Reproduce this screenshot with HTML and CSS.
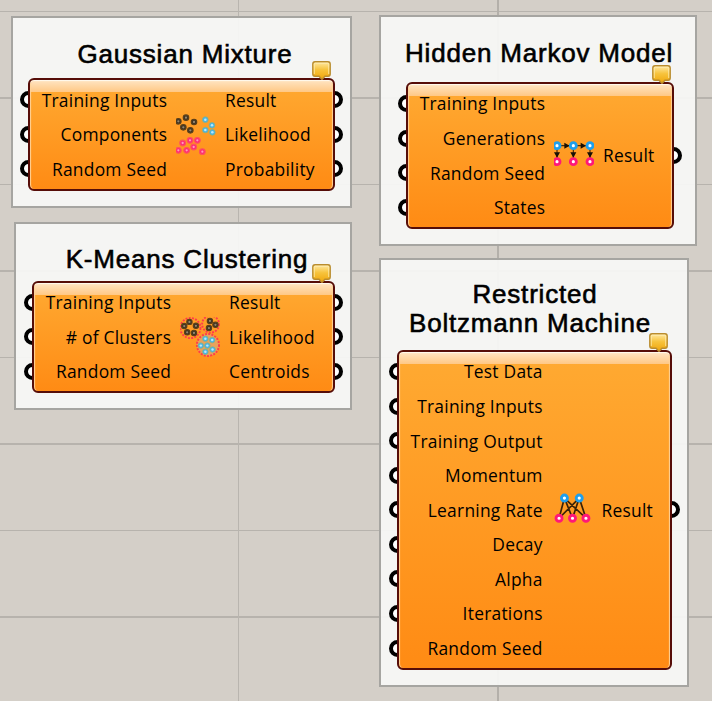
FILE: index.html
```html
<!DOCTYPE html>
<html lang="en">
<head>
<meta charset="utf-8">
<title>Machine learning components</title>
<link rel="stylesheet" href="styles.css">
</head>
<body>
<svg class="defs" width="0" height="0" aria-hidden="true">
  <defs>
    <linearGradient id="gold" x1="0" y1="0" x2="0" y2="1">
      <stop offset="0" stop-color="#ffe9a4"/><stop offset=".45" stop-color="#f7c33c"/><stop offset="1" stop-color="#efa50a"/>
    </linearGradient>
    <g id="dark"><circle r="8.2" fill="#3f3424" stroke="#5c401a" stroke-width="3.5"/><circle r="3.4" fill="#96866c"/></g>
    <g id="sky"><circle r="8.6" fill="#45b4ea" stroke="#8fb07c" stroke-width="2.4"/><circle r="3.8" fill="#b8e8fb"/></g>
    <g id="rose"><circle r="8.6" fill="#ff2a78" stroke="#ff5458" stroke-width="3.4"/><circle r="3.4" fill="#ff9cb6"/></g>
    <g id="blue"><circle r="9" fill="#fff" stroke="#1f9fec" stroke-width="8.5"/></g>
    <g id="pink"><circle r="9" fill="#fff" stroke="#ff1878" stroke-width="8.5"/></g>
    <symbol id="tag" viewBox="0 0 19 19">
      <path d="M3 .8H16Q18.2.8 18.2 3V13Q18.2 15.2 16 15.2H13L10 18.4L7 15.2H3Q.8 15.2.8 13V3Q.8.8 3 .8Z" fill="url(#gold)" stroke="#b98c2e" stroke-width="1.4"/>
      <path d="M2.3 13V3.2Q2.3 2.2 3.3 2.2H15.7Q16.7 2.2 16.7 3.2V13" fill="none" stroke="#fff0b8" stroke-width=".9" opacity=".8"/>
    </symbol>
  </defs>
</svg>
<main class="canvas">
  <section class="group gaussian">
    <h2 class="title">Gaussian Mixture</h2>
    <div class="node">
      <svg class="tag"><use href="#tag"/></svg>
      <ul class="ports in"><li>Training Inputs</li><li>Components</li><li>Random Seed</li></ul>
      <svg class="icon" viewBox="18 24 120 126">
        <use href="#dark" x="25" y="46"/><use href="#dark" x="48" y="35"/><use href="#dark" x="72" y="48"/><use href="#dark" x="40" y="64"/><use href="#dark" x="61" y="73"/>
        <use href="#sky" x="106" y="41"/><use href="#sky" x="126" y="58"/><use href="#sky" x="106" y="72"/><use href="#sky" x="127" y="79"/>
        <use href="#rose" x="38" y="111"/><use href="#rose" x="60" y="103"/><use href="#rose" x="82" y="103"/><use href="#rose" x="71" y="123"/><use href="#rose" x="25" y="133"/><use href="#rose" x="50" y="133"/><use href="#rose" x="97" y="137"/>
      </svg>
      <ul class="ports out"><li>Result</li><li>Likelihood</li><li>Probability</li></ul>
    </div>
  </section>

  <section class="group kmeans">
    <h2 class="title">K-Means Clustering</h2>
    <div class="node">
      <svg class="tag"><use href="#tag"/></svg>
      <ul class="ports in"><li>Training Inputs</li><li># of Clusters</li><li>Random Seed</li></ul>
      <svg class="icon" viewBox="540 303 123 123">
        <g fill="none" stroke="#ff3c4b" stroke-width="6" stroke-dasharray="6 4">
          <circle cx="572" cy="337" r="31"/><circle cx="634" cy="325" r="26"/><circle cx="626" cy="389" r="34" fill="#e9a25c"/>
        </g>
        <use href="#dark" x="569" y="318"/><use href="#dark" x="553" y="331"/><use href="#dark" x="589" y="330"/><use href="#dark" x="562" y="350"/><use href="#dark" x="583" y="352"/>
        <use href="#dark" x="632" y="315"/><use href="#dark" x="649" y="327"/><use href="#dark" x="629" y="337"/>
        <use href="#sky" x="618" y="370"/><use href="#sky" x="639" y="374"/><use href="#sky" x="604" y="391"/><use href="#sky" x="624" y="391"/><use href="#sky" x="640" y="403"/><use href="#sky" x="618" y="410"/>
      </svg>
      <ul class="ports out"><li>Result</li><li>Likelihood</li><li>Centroids</li></ul>
    </div>
  </section>

  <section class="group markov">
    <h2 class="title">Hidden Markov Model</h2>
    <div class="node">
      <svg class="tag"><use href="#tag"/></svg>
      <ul class="ports in"><li>Training Inputs</li><li>Generations</li><li>Random Seed</li><li>States</li></ul>
      <svg class="icon" viewBox="24 32 120 86">
        <path d="M33 46H132M33 46V94M82 46V94M132 46V94" fill="none" stroke="#4a2c08" stroke-width="3.5"/>
        <path d="M55 37L71 46L55 55ZM104 37L120 46L104 55ZM24 66H42L33 82ZM73 66H91L82 82ZM123 66H141L132 82Z" fill="#180f04"/>
        <use href="#blue" x="33" y="46"/><use href="#blue" x="82" y="46"/><use href="#blue" x="132" y="46"/>
        <use href="#pink" x="33" y="94"/><use href="#pink" x="82" y="94"/><use href="#pink" x="132" y="94"/>
      </svg>
      <ul class="ports out"><li>Result</li></ul>
    </div>
  </section>

  <section class="group boltzmann">
    <h2 class="title"><span class="first-line">Restricted</span><br>Boltzmann Machine</h2>
    <div class="node">
      <svg class="tag"><use href="#tag"/></svg>
      <ul class="ports in"><li>Test Data</li><li>Training Inputs</li><li>Training Output</li><li>Momentum</li><li>Learning Rate</li><li>Decay</li><li>Alpha</li><li>Iterations</li><li>Random Seed</li></ul>
      <svg class="icon" viewBox="42 519 110 101">
        <path d="M73 534L57 594M73 534L97 594M73 534L137 594M117 534L57 594M117 534L97 594M117 534L137 594" fill="none" stroke="#3a2206" stroke-width="5"/>
        <use href="#blue" x="73" y="534"/><use href="#blue" x="117" y="534"/>
        <use href="#pink" x="57" y="594"/><use href="#pink" x="97" y="594"/><use href="#pink" x="137" y="594"/>
      </svg>
      <ul class="ports out"><li>Result</li></ul>
    </div>
  </section>
</main>
</body>
</html>
```
FILE: styles.css
```css
*, *::before { box-sizing: border-box; }

body {
  margin: 0;
  color: #000;
  font-family: "Open Sans", "Noto Sans", sans-serif;
}

.defs { position: absolute; }

.canvas {
  position: relative;
  width: 712px;
  height: 701px;
  overflow: hidden;
  background-color: #d4cfc8;
  background-image:
    linear-gradient(90deg, #b9b5af 1px, transparent 1px),
    linear-gradient(90deg, #b4b0aa 2px, transparent 2px),
    repeating-linear-gradient(180deg, #b7b3ad 0 1px, transparent 1px 86.5px);
  background-position: 238px 0, 497px 0, 0 11px;
  background-size: 1000px 100%, 1000px 100%, 100% 100%;
  background-repeat: no-repeat;
}

/* Groups sit at free positions on the canvas */
.group {
  position: absolute;
  border: 2px solid #a6a5a1;
  background: rgba(248, 247, 246, .93);
}

.gaussian  { left: 11px;  top: 16px;  width: 341px; height: 192px; padding: 21px 0 0 15px; }
.kmeans    { left: 14px;  top: 222px; width: 338px; height: 188px; padding: 20px 0 0 16px; }
.markov    { left: 379px; top: 15px;  width: 318px; height: 231px; padding: 21px 0 0 24px; }
.boltzmann { left: 379px; top: 258px; width: 310px; height: 429px; padding: 20px 0 0 16px; }

.title {
  margin: 0;
  font: 400 26px/30px "Liberation Sans", Arial, sans-serif;
  text-align: center;
  white-space: nowrap;
  -webkit-text-stroke: .6px #000;
  letter-spacing: .8px;
}

.gaussian .title  { width: 314px; height: 39px; }
.kmeans .title    { width: 310px; height: 37px; }
.markov .title    { width: 266px; height: 44px; }
.boltzmann .title { width: 266px; height: 70px; line-height: 29.3px; }
.first-line { padding-left: 10px; }

.node {
  position: relative;
  z-index: 0;
  display: grid;
  grid-template-columns: 139px 40px 1fr;
  column-gap: 9px;
  align-items: center;
}

.gaussian .node  { width: 307px; height: 113px; }
.kmeans .node    { width: 303px; height: 112px; }
.markov .node    { width: 268px; height: 147px; margin-left: 1px; }
.markov .tag     { right: 3px; }
.boltzmann .node { width: 275px; height: 320px; grid-template-columns: 145.5px 37px 1fr; column-gap: 11px; }

.node::before {
  content: "";
  position: absolute;
  inset: 0;
  z-index: -1;
  border: 2px solid #560d08;
  border-radius: 6px;
  background:
    linear-gradient(#ffe5c4, #ffc885) 0 0 / 100% 12px no-repeat,
    linear-gradient(#ffaa32, #ff8b14);
  box-shadow: inset 0 2px 1px -1px #fffaf0, inset 2px 0 1px -1px #ffd39a, inset -2px 0 1px -1px #ffd39a;
}

.ports {
  margin: 0;
  padding: 0;
  list-style: none;
  font-size: 17.4px;
  letter-spacing: .25px;
  line-height: 34.6px;
  white-space: nowrap;
}

.ports li { position: relative; height: 34.6px; }
.in { text-align: right; }
.in li { margin-right: -.2px; }

.ports li::before {
  content: "";
  position: absolute;
  z-index: -2;
  top: 8.6px;
  width: 17px;
  height: 17px;
  border: 4px solid #000;
  border-radius: 50%;
  background: #fff;
}

.in li::before { left: -8px; }
.out li::before { right: -8px; }

.icon { display: block; width: 100%; }

.tag {
  position: absolute;
  top: -17px;
  right: 4px;
  width: 19px;
  height: 19px;
}
```
